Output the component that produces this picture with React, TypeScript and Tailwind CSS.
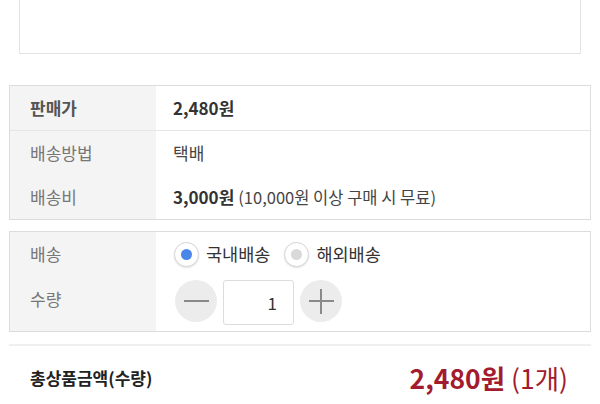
import { useState } from "react";

const font = { fontFamily: '"Noto Sans CJK KR", "Noto Sans", sans-serif' };

function Radio({ checked, label }: { checked: boolean; label: string }) {
  return (
    <label className="flex items-center gap-[7px]">
      <span className="flex h-[25px] w-[25px] items-center justify-center rounded-full border border-[#d6d6d6] bg-white shadow-[0_1px_2px_rgba(0,0,0,0.12)]">
        <span
          className={
            checked
              ? "h-[11px] w-[11px] rounded-full bg-[#4a86e8]"
              : "h-[11px] w-[11px] rounded-full bg-[#d9d9d9]"
          }
        />
      </span>
      <span className="text-[17.5px] text-[#333]">{label}</span>
    </label>
  );
}

export default function App() {
  const [qty] = useState(1);
  return (
    <div className="h-[404px] w-[600px] overflow-hidden bg-white" style={font}>
      <div className="mx-[19px] h-[54px] border-x border-b border-[#e3e3e3]" />

      <div className="mx-[9px] mt-[31px] border border-[#dcdcdc]">
        <div className="flex h-[45px] border-b border-[#e6e6e6]">
          <div className="flex w-[146px] items-center bg-[#f4f4f4] pl-[20px] text-[17px] font-bold text-[#555]">
            판매가
          </div>
          <div className="flex items-center pl-[17px] text-[17px] font-bold text-[#333]">
            2,480원
          </div>
        </div>
        <div className="flex h-[44px]">
          <div className="flex w-[146px] items-center bg-[#f4f4f4] pl-[20px] text-[17px] text-[#777]">
            배송방법
          </div>
          <div className="flex items-center pl-[17px] text-[17px] text-[#444]">
            택배
          </div>
        </div>
        <div className="flex h-[44px]">
          <div className="flex w-[146px] items-center bg-[#f4f4f4] pl-[20px] text-[17px] text-[#777]">
            배송비
          </div>
          <div className="flex items-center gap-[4px] pl-[17px] text-[16.5px] text-[#444]">
            <span className="text-[17px] font-bold text-[#333]">3,000원</span>
            <span>(10,000원 이상 구매 시 무료)</span>
          </div>
        </div>
      </div>

      <div className="mx-[9px] mt-[11px] border border-[#dcdcdc]">
        <div className="flex h-[44px]">
          <div className="flex w-[146px] items-center bg-[#f4f4f4] pl-[20px] text-[17px] text-[#777]">
            배송
          </div>
          <div className="flex items-center gap-[14px] pl-[18px]">
            <Radio checked label="국내배송" />
            <Radio checked={false} label="해외배송" />
          </div>
        </div>
        <div className="flex h-[55px]">
          <div className="w-[146px] bg-[#f4f4f4] pl-[20px] pt-[11px] text-[17px] leading-[24px] text-[#777]">
            수량
          </div>
          <div className="flex items-start gap-[6px] pl-[19px] pt-[4px]">
            <button className="flex h-[42px] w-[42px] items-center justify-center rounded-full bg-[#ececec]">
              <span className="h-[1.5px] w-[25px] bg-[#8a8a8a]" />
            </button>
            <div className="flex h-[45px] w-[71px] items-center justify-end rounded-[3px] border border-[#dcdcdc] pr-[16px] text-[17px] text-[#333]">
              {qty}
            </div>
            <button className="relative flex h-[42px] w-[42px] items-center justify-center rounded-full bg-[#ececec]">
              <span className="h-[1.5px] w-[25px] bg-[#8a8a8a]" />
              <span className="absolute h-[25px] w-[1.5px] bg-[#8a8a8a]" />
            </button>
          </div>
        </div>
      </div>

      <div className="mx-[9px] mt-[12px] border-t-2 border-[#f0f0f0]" />

      <div className="flex items-center justify-between pl-[30px] pr-[32px] pt-[12px]">
        <span className="text-[17px] font-bold text-[#222]">총상품금액(수량)</span>
        <span className="text-[26.5px] text-[#a31b2e]">
          <span className="font-bold">2,480원</span> (1개)
        </span>
      </div>
    </div>
  );
}
